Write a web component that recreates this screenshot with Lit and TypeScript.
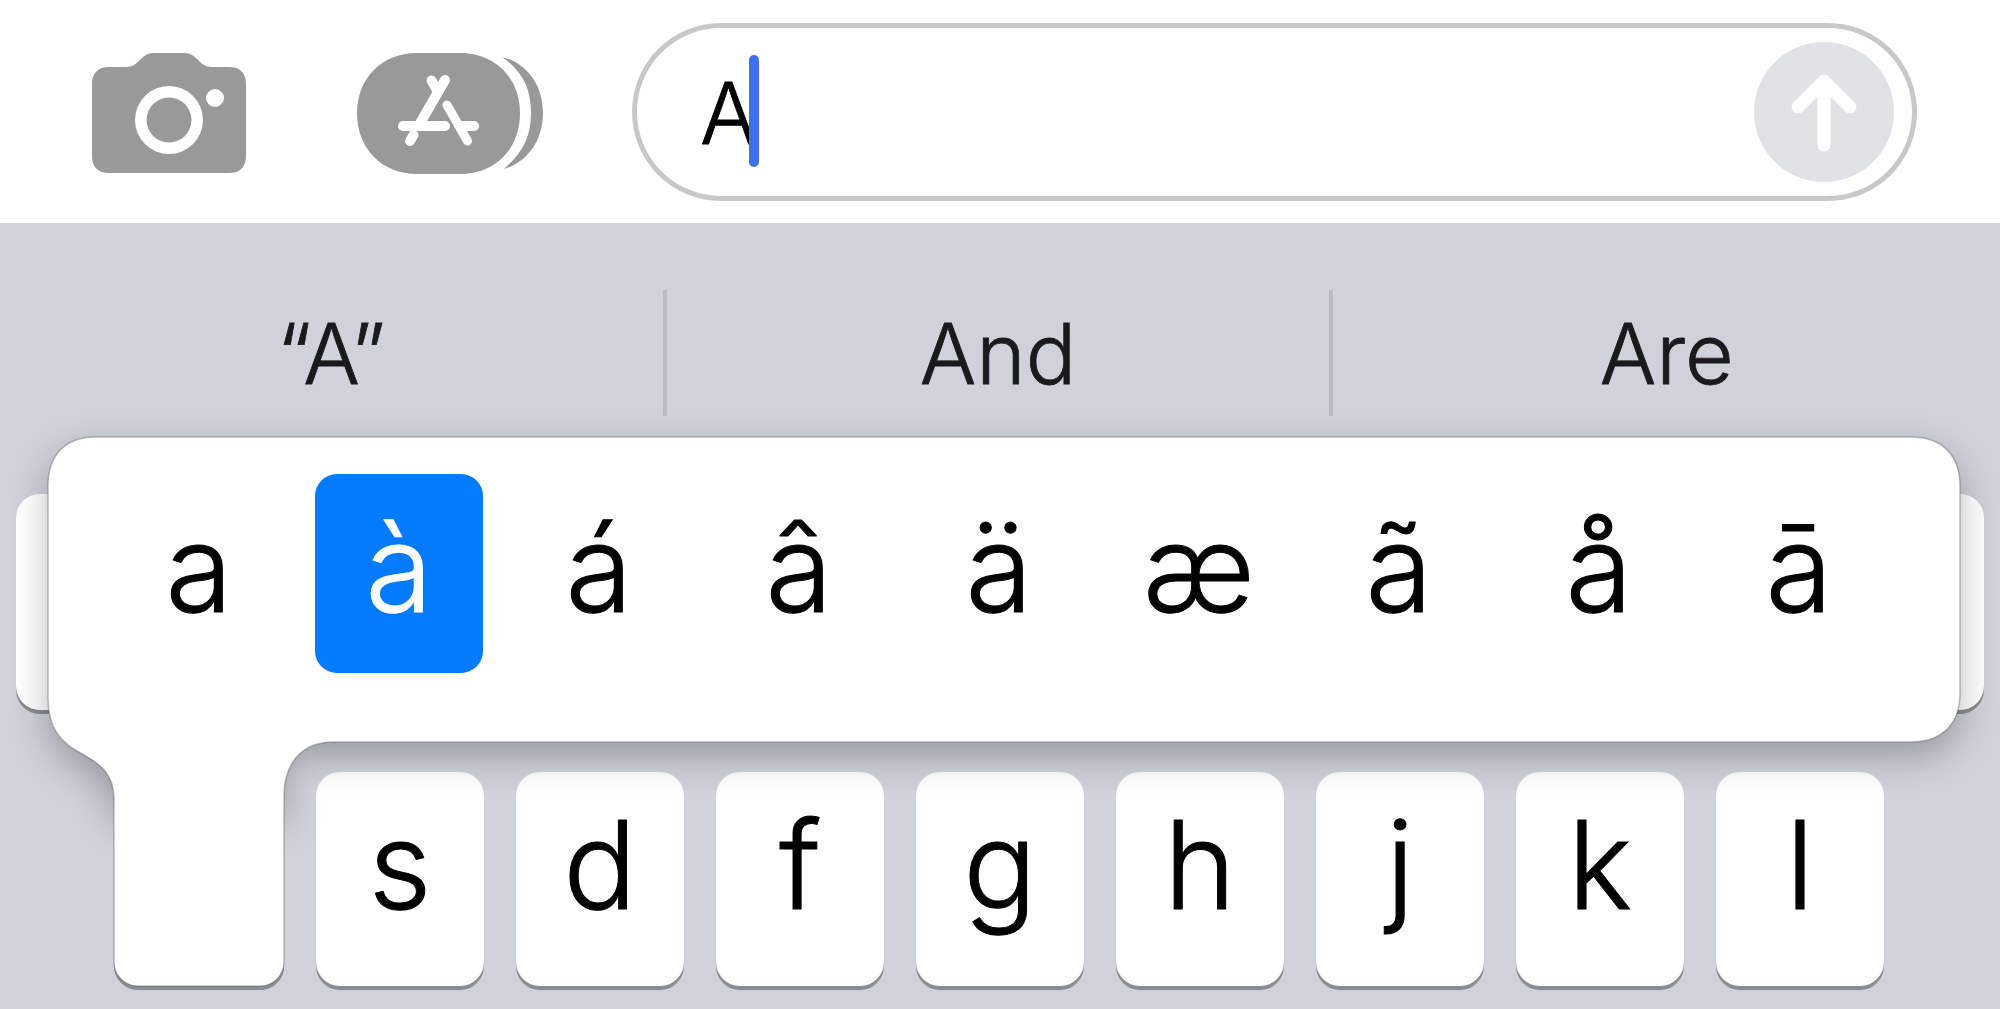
import { LitElement, html, css } from 'lit';
import { customElement } from 'lit/decorators.js';

const SUGGESTIONS = ['“A”', 'And', 'Are'];
const ACCENTS = ['a', 'à', 'á', 'â', 'ä', 'æ', 'ã', 'å', 'ā'];
const HOME_ROW = ['', 's', 'd', 'f', 'g', 'h', 'j', 'k', 'l'];
const TOP_ROW = new Array(10).fill('');

// popup outline, coordinates relative to the popup box (page x-47, y-437)
const POPUP_PATH =
  'M49,0 H1864 C1895,0 1913,18 1913,49 V256 C1913,287 1895,305 1864,305 H286 C256,305 237,325 237,359 V525 A24,24 0 0 1 213,549 H91 A24,24 0 0 1 67,525 V363 C67,335 52,326 30,314 C13,304 1,290 1,261 V49 C1,18 18,0 49,0 Z';
// part of the popup that casts the soft shadow, no stem foot
const SHADOW_PATH =
  'M49,0 H1864 C1895,0 1913,18 1913,49 V256 C1913,287 1895,305 1864,305 H237 V370 H67 V363 C67,335 52,326 30,314 C13,304 1,290 1,261 V49 C1,18 18,0 49,0 Z';

@customElement('app-root')
export class AppRoot extends LitElement {
  static styles = css`
    :host {
      display: block;
      width: 2000px;
      height: 1009px;
      overflow: hidden;
      position: relative;
      background: #cfd2da;
      font-family: Inter, 'Liberation Sans', sans-serif;
      font-weight: 300;
      color: #000;
    }
    .top {
      display: flex;
      align-items: flex-start;
      height: 223px;
      box-sizing: border-box;
      padding: 23px 83px 0 92px;
      background: #fff;
    }
    .camera {
      display: block;
      width: 154px;
      height: 120px;
      margin-top: 30px;
      margin-right: 111px;
    }
    .store {
      display: block;
      width: 186px;
      height: 121px;
      margin-top: 30px;
      margin-right: 89px;
    }
    .field {
      flex: 1;
      height: 178px;
      box-sizing: border-box;
      border: 5px solid #c8c8c8;
      border-radius: 89px;
      display: flex;
      align-items: center;
      padding: 0 18px 0 63px;
    }
    .typed {
      font-size: 85px;
      -webkit-text-stroke: 0.8px currentColor;
      line-height: 1;
      margin-top: 2px;
    }
    .caret {
      width: 10px;
      height: 112px;
      border-radius: 5px;
      background: #3f6ef2;
      margin-left: -8px;
      margin-top: -2px;
    }
    .send {
      width: 140px;
      height: 140px;
      margin-left: auto;
      display: block;
    }
    .suggestions {
      display: grid;
      grid-template-columns: repeat(3, 1fr);
      margin-top: 67px;
      height: 126px;
    }
    .suggestion {
      display: flex;
      align-items: center;
      justify-content: center;
      font-size: 84px;
      -webkit-text-stroke: 0.8px currentColor;
      color: #1a1a1c;
      border-right: 4px solid #b9bbc2;
    }
    .suggestion:last-child {
      border-right: none;
    }
    .row {
      display: flex;
      justify-content: center;
      gap: 32px;
    }
    .row.upper {
      margin-top: 78px;
      height: 216px;
    }
    .row.home {
      margin-top: 62px;
      height: 214px;
    }
    .key {
      width: 168px;
      box-sizing: border-box;
      padding-bottom: 28px;
      border-radius: 24px;
      background: #fff;
      box-shadow: 0 4px 0 #8b8c91;
      display: flex;
      align-items: center;
      justify-content: center;
      font-size: 122px;
      -webkit-text-stroke: 1px currentColor;
      line-height: 1;
    }
    .popup {
      position: absolute;
      left: 47px;
      top: 437px;
      width: 1913px;
      height: 305px;
      box-sizing: border-box;
      padding: 37px 0 0 68px;
      display: flex;
      gap: 32px;
      align-items: flex-start;
    }
    .shape {
      position: absolute;
      left: 0;
      top: 0;
      width: 1913px;
      height: 553px;
      overflow: visible;
    }
    .shape .soft {
      fill: rgba(0, 0, 0, 0.27);
      filter: blur(18px);
    }
    .shape .foot {
      fill: #8b8c91;
    }
    .shape .body {
      fill: #fff;
      stroke: rgba(90, 92, 100, 0.4);
      stroke-width: 1.5px;
    }
    .accent {
      position: relative;
      width: 168px;
      height: 199px;
      box-sizing: border-box;
      padding-bottom: 12px;
      border-radius: 22px;
      display: flex;
      align-items: center;
      justify-content: center;
      font-size: 122px;
      -webkit-text-stroke: 1px currentColor;
      line-height: 1;
    }
    .accent.selected {
      background: #047bff;
      color: #fff;
    }
  `;

  render() {
    return html`
      <div class="top">
        <svg class="camera" viewBox="0 0 154 120">
          <path
            fill="#999"
            fill-rule="evenodd"
            d="M17,14 H34 C43,14 46,8 50,5 C54,1 58,0 63,0 H91 C96,0 100,1 104,5 C108,8 111,14 120,14 H137 C148,14 154,20 154,31 V103 C154,114 148,120 137,120 H17 C6,120 0,114 0,103 V31 C0,20 6,14 17,14 Z M77,33 A34,34 0 1 0 77,101 A34,34 0 1 0 77,33 Z M77,44.5 A22.5,22.5 0 1 1 77,89.5 A22.5,22.5 0 1 1 77,44.5 Z M123,36 A9,9 0 1 0 123,54 A9,9 0 1 0 123,36 Z"
          />
        </svg>
        <svg class="store" viewBox="0 0 186 121">
          <path
            fill="#999"
            d="M60,0 H103 C138,0 163,25 163,60 C163,96 138,121 103,121 H60 C25,121 0,96 0,60 C0,25 25,0 60,0 Z"
          />
          <path
            fill="#999"
            d="M145,4 C170,10 186,32 186,60 C186,90 168,110 147,116 C165,100 174,85 174,60 C174,35 165,18 145,4 Z"
          />
          <g fill="none" stroke="#fff" stroke-width="10" stroke-linecap="round">
            <path d="M88,27 L62,72" />
            <path d="M74.5,27.5 L80,37" />
            <path d="M90,52 L110.5,88" stroke-width="9" />
            <path d="M46,73 H88" />
            <path d="M105,73 H117" />
            <path d="M53,88 L56.5,82" />
          </g>
        </svg>
        <div class="field">
          <span class="typed">A</span>
          <span class="caret"></span>
          <svg class="send" viewBox="0 0 140 140">
            <circle cx="70" cy="70" r="70" fill="#e0e2e6" />
            <path
              d="M70,39 V103 M44,65 L70,39 L96,65"
              fill="none"
              stroke="#fff"
              stroke-width="13"
              stroke-linecap="round"
              stroke-linejoin="round"
            />
          </svg>
        </div>
      </div>
      <div class="suggestions">
        ${SUGGESTIONS.map((s) => html`<div class="suggestion">${s}</div>`)}
      </div>
      <div class="row upper">${TOP_ROW.map((k) => html`<div class="key">${k}</div>`)}</div>
      <div class="row home">${HOME_ROW.map((k) => html`<div class="key">${k}</div>`)}</div>
      <div class="popup">
        <svg class="shape" viewBox="0 0 1913 553">
          <path class="soft" d=${SHADOW_PATH} transform="translate(0 14)" />
          <rect class="foot" x="67" y="440" width="170" height="113" rx="24" />
          <path class="body" d=${POPUP_PATH} />
        </svg>
        ${ACCENTS.map(
          (a) => html`<div class="accent ${a === 'à' ? 'selected' : ''}">${a}</div>`
        )}
      </div>
    `;
  }
}
